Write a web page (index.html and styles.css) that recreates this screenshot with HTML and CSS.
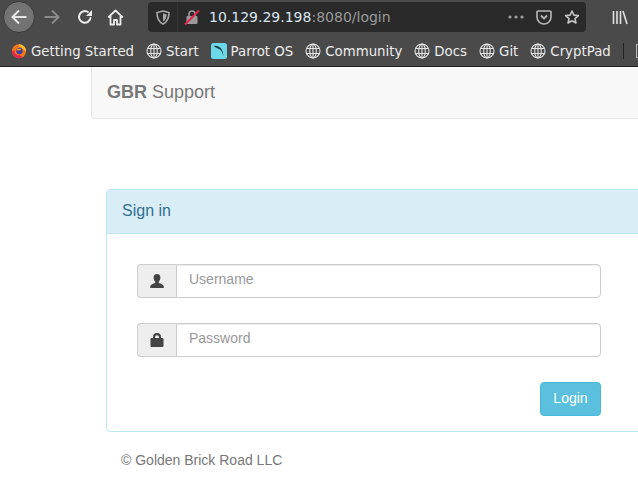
FILE: index.html
```html
<!DOCTYPE html>
<html lang="en">
<head>
<meta charset="utf-8">
<title>GBR Support</title>
<link rel="stylesheet" href="styles.css">
</head>
<body>
<header class="browser">
  <div class="toolbar">
    <button class="nav-btn back" aria-label="Back">
      <svg width="18" height="18" viewBox="0 0 18 18"><path d="M16.500 9H2.500M9 2.500L2.500 9L9 15.500" fill="none" stroke="#e6e6e6" stroke-width="2"/></svg>
    </button>
    <span class="nav-icon forward">
      <svg width="18" height="18" viewBox="0 0 18 18"><path d="M1.500 9H15.500M9 2.500L15.500 9L9 15.500" fill="none" stroke="#8a8a8a" stroke-width="2"/></svg>
    </span>
    <span class="nav-icon reload">
      <svg width="16" height="16" viewBox="0 0 16 16"><path d="M13.600 8.200A5.800 5.800 0 1 1 11.500 3.400" fill="none" stroke="#ececec" stroke-width="2"/><path d="M15 1V7H9Z" fill="#ececec"/></svg>
    </span>
    <span class="nav-icon home">
      <svg width="17" height="17" viewBox="0 0 17 17"><path d="M1.200 8.400L8.500 1.500L15.800 8.400M3.500 7V15.500H7V11H10V15.500H13.500V7" fill="none" stroke="#ececec" stroke-width="1.800" stroke-linejoin="round"/></svg>
    </span>
    <div class="urlbar">
      <span class="shield">
        <svg width="14" height="15" viewBox="0 0 14 15"><path d="M7 1L13 2.500C13 8 12 11.500 7 14C2 11.500 1 8 1 2.500Z" fill="none" stroke="#a8a8a8" stroke-width="1.600"/><path d="M7 3.500L10.600 4.200C10.500 7.500 9.800 9.800 7 11.500Z" fill="#a8a8a8"/></svg>
      </span>
      <span class="divider"></span>
      <span class="lock">
        <svg width="16" height="16" viewBox="0 0 16 16"><path d="M5 7V5A3 3 0 0 1 11 5V7" fill="none" stroke="#9a9a9a" stroke-width="1.700"/><rect x="2.500" y="7" width="11" height="8" rx="1" fill="#9a9a9a"/><path d="M1 15.500L15 1.500" stroke="#e2264d" stroke-width="2"/></svg>
      </span>
      <span class="url"><span class="host">10.129.29.198</span>:8080/login</span>
      <span class="url-actions">
        <svg width="16" height="4" viewBox="0 0 16 4"><circle cx="2" cy="2" r="1.600" fill="#a0a0a0"/><circle cx="8" cy="2" r="1.600" fill="#a0a0a0"/><circle cx="14" cy="2" r="1.600" fill="#a0a0a0"/></svg>
        <svg width="16" height="15" viewBox="0 0 16 15"><path d="M2.200 1H13.800A1.200 1.200 0 0 1 15 2.200V7A7 7 0 0 1 1 7V2.200A1.200 1.200 0 0 1 2.200 1Z" fill="none" stroke="#b8b8b8" stroke-width="1.600"/><path d="M4.800 5.500L8 8.500L11.200 5.500" fill="none" stroke="#b8b8b8" stroke-width="1.800"/></svg>
        <svg width="16" height="16" viewBox="0 0 17 16"><path d="M8.500 1.600L10.500 6L15.300 6.500L11.700 9.700L12.700 14.400L8.500 12L4.300 14.400L5.300 9.700L1.700 6.500L6.500 6Z" fill="none" stroke="#c4c4c4" stroke-width="1.700" stroke-linejoin="round"/></svg>
      </span>
    </div>
    <span class="library">
      <svg width="16" height="15" viewBox="0 0 16 15"><path d="M1.500 1V14M5 1V14M8.500 1V14M11 1L15 14" fill="none" stroke="#e0e0e0" stroke-width="1.600"/></svg>
    </span>
  </div>
  <nav class="bookmarks">
    <span class="bookmark">
      <svg width="16" height="16" viewBox="0 0 16 16"><circle cx="8" cy="8.300" r="7" fill="#f6761c"/><path d="M8 1.300A7 7 0 0 1 15 8.300L12 6A5 5 0 0 0 8 3.500Z" fill="#fbc02d"/><path d="M1 8.300A7 7 0 0 0 8 15.300A7 7 0 0 0 12 14L8 12A4 4 0 0 1 3.500 7Z" fill="#e22850"/><circle cx="8.500" cy="8" r="3.200" fill="#3b3fa5"/><path d="M5.500 5.500L10.500 6L9 7.500H6.500Z" fill="#f6a01c"/></svg>
      Getting Started
    </span>
    <span class="bookmark"><svg width="16" height="16" viewBox="0 0 16 16"><use href="#globe"/></svg>Start</span>
    <span class="bookmark">
      <svg width="16" height="16" viewBox="0 0 16 16"><rect width="16" height="16" rx="2.500" fill="#6bd9ea"/><path d="M2.500 3C7.500 1.500 12 5 12.500 13C11 8.500 9.500 5.800 5.500 5Z" fill="#27414a"/></svg>
      Parrot OS
    </span>
    <span class="bookmark"><svg width="16" height="16" viewBox="0 0 16 16"><use href="#globe"/></svg>Community</span>
    <span class="bookmark"><svg width="16" height="16" viewBox="0 0 16 16"><use href="#globe"/></svg>Docs</span>
    <span class="bookmark"><svg width="16" height="16" viewBox="0 0 16 16"><use href="#globe"/></svg>Git</span>
    <span class="bookmark"><svg width="16" height="16" viewBox="0 0 16 16"><use href="#globe"/></svg>CryptPad</span>
    <span class="bm-sep"></span>
    <span class="bm-more"></span>
  </nav>
  <svg class="defs" width="0" height="0"><defs><g id="globe" fill="none" stroke="#e4e4e4" stroke-width="1.100"><circle cx="8" cy="8" r="7"/><ellipse cx="8" cy="8" rx="3.300" ry="7"/><path d="M1.500 5.500H14.500M1.500 10.500H14.500M8 1V15"/></g></defs></svg>
</header>
<main class="page">
  <div class="navbar"><a class="brand"><b>GBR</b> Support</a></div>
  <section class="panel">
    <div class="panel-heading">Sign in</div>
    <form class="panel-body">
      <div class="input-group">
        <span class="addon">
          <svg width="14" height="14" viewBox="0 0 14 14"><path d="M7 0C4.600 0 3.600 1.600 3.600 3.700C3.600 5.500 4.400 6.900 5.200 7.600V9C3.200 9.800 0.800 10.300 0.300 12V14H13.700V12C13.200 10.300 10.800 9.800 8.800 9V7.600C9.600 6.900 10.400 5.500 10.400 3.700C10.400 1.600 9.400 0 7 0Z" fill="#444"/></svg>
        </span>
        <input class="field" type="text" placeholder="Username">
      </div>
      <div class="input-group">
        <span class="addon">
          <svg width="14" height="14" viewBox="0 0 14 14"><path d="M3 6V4A4 4 0 0 1 11 4V6H9V4.200A2 2 0 0 0 5 4.200V6Z" fill="#444"/><rect x="0.500" y="5" width="13" height="9" rx="1.200" fill="#444"/></svg>
        </span>
        <input class="field" type="password" placeholder="Password">
      </div>
      <div class="actions"><button class="login" type="button">Login</button></div>
    </form>
  </section>
  <footer class="footer">© Golden Brick Road LLC</footer>
</main>
</body>
</html>
```
FILE: styles.css
```css
* { box-sizing: border-box; }
html, body { margin: 0; height: 100%; overflow: hidden; background: #fff; }
body { font-family: "Liberation Sans", Arial, sans-serif; font-size: 14px; color: #333; }

.browser { height: 67px; background: #4a4a4a; border-bottom: 1px solid #1f1f1f; font-family: "DejaVu Sans", sans-serif; overflow: hidden; }
.defs { position: absolute; }
.toolbar { height: 36px; display: flex; align-items: center; padding: 0 0 2px 3px; }
.toolbar > * { flex: none; }
.nav-btn { width: 32px; height: 32px; border-radius: 50%; border: 1px solid #3a3a3a; background: #737373; padding: 0; display: flex; align-items: center; justify-content: center; }
.nav-icon { display: flex; align-items: center; justify-content: center; }
.forward { margin-left: 8px; }
.reload { margin-left: 16px; }
.home { margin-left: 14px; }
.urlbar { margin-left: 24px; width: 438px; height: 30px; background: #2a2a2a; border-radius: 4px; display: flex; align-items: center; }
.shield { margin-left: 8px; display: flex; }
.divider { width: 1px; height: 30px; background: #333; margin-left: 7px; }
.lock { margin-left: 6px; display: flex; }
.url { margin-left: 9px; font-size: 14px; color: #9a9a9a; white-space: nowrap; }
.host { color: #d7e3ee; }
.url-actions { margin-left: auto; margin-right: 6px; display: flex; align-items: center; gap: 12px; }
.library { margin-left: 26px; display: flex; }

.bookmarks { height: 30px; display: flex; align-items: center; padding-left: 11px; gap: 12px; color: #ececec; font-size: 13.33px; white-space: nowrap; }
.bookmarks > * { flex: none; }
.bookmark { display: flex; align-items: center; gap: 4px; }
.bm-sep { width: 1px; height: 16px; background: #222; }
.bm-more { width: 8px; height: 14px; border: 1px solid #bbb; }

.page { padding-left: 91px; overflow: hidden; }
.navbar { width: 600px; height: 52px; background: #f8f8f8; border: 1px solid #e7e7e7; border-top: 0; border-radius: 0 0 4px 4px; padding-left: 15px; display: flex; align-items: center; }
.brand { font-size: 18px; color: #777; }
.panel { width: 600px; margin: 70px 0 0 15px; border: 1px solid #bce8f1; border-radius: 4px; background: #fff; }
.panel-heading { height: 44px; background: #d9edf7; border-bottom: 1px solid #bce8f1; border-radius: 3px 3px 0 0; color: #31708f; font-size: 16px; padding: 0 0 2px 15px; display: flex; align-items: center; }
.panel-body { padding: 30px 0 15px 30px; }
.input-group { display: flex; width: 464px; height: 34px; margin-bottom: 25px; }
.addon { width: 39px; background: #eee; border: 1px solid #ccc; border-right: 0; border-radius: 4px 0 0 4px; display: flex; align-items: center; justify-content: center; flex: none; }
.field { flex: 1; min-width: 0; border: 1px solid #ccc; border-radius: 0 4px 4px 0; padding: 0 12px 5px; font: inherit; color: #555; box-shadow: inset 0 1px 1px rgba(0,0,0,.075); outline: none; }
.field::placeholder { color: #999; opacity: 1; }
.actions { width: 464px; display: flex; justify-content: flex-end; }
.login { width: 61px; height: 34px; background: #5bc0de; border: 1px solid #46b8da; border-radius: 4px; color: #fff; font: inherit; padding: 0 0 2px; }
.footer { margin: 20px 0 0 30px; color: #777; }
```
